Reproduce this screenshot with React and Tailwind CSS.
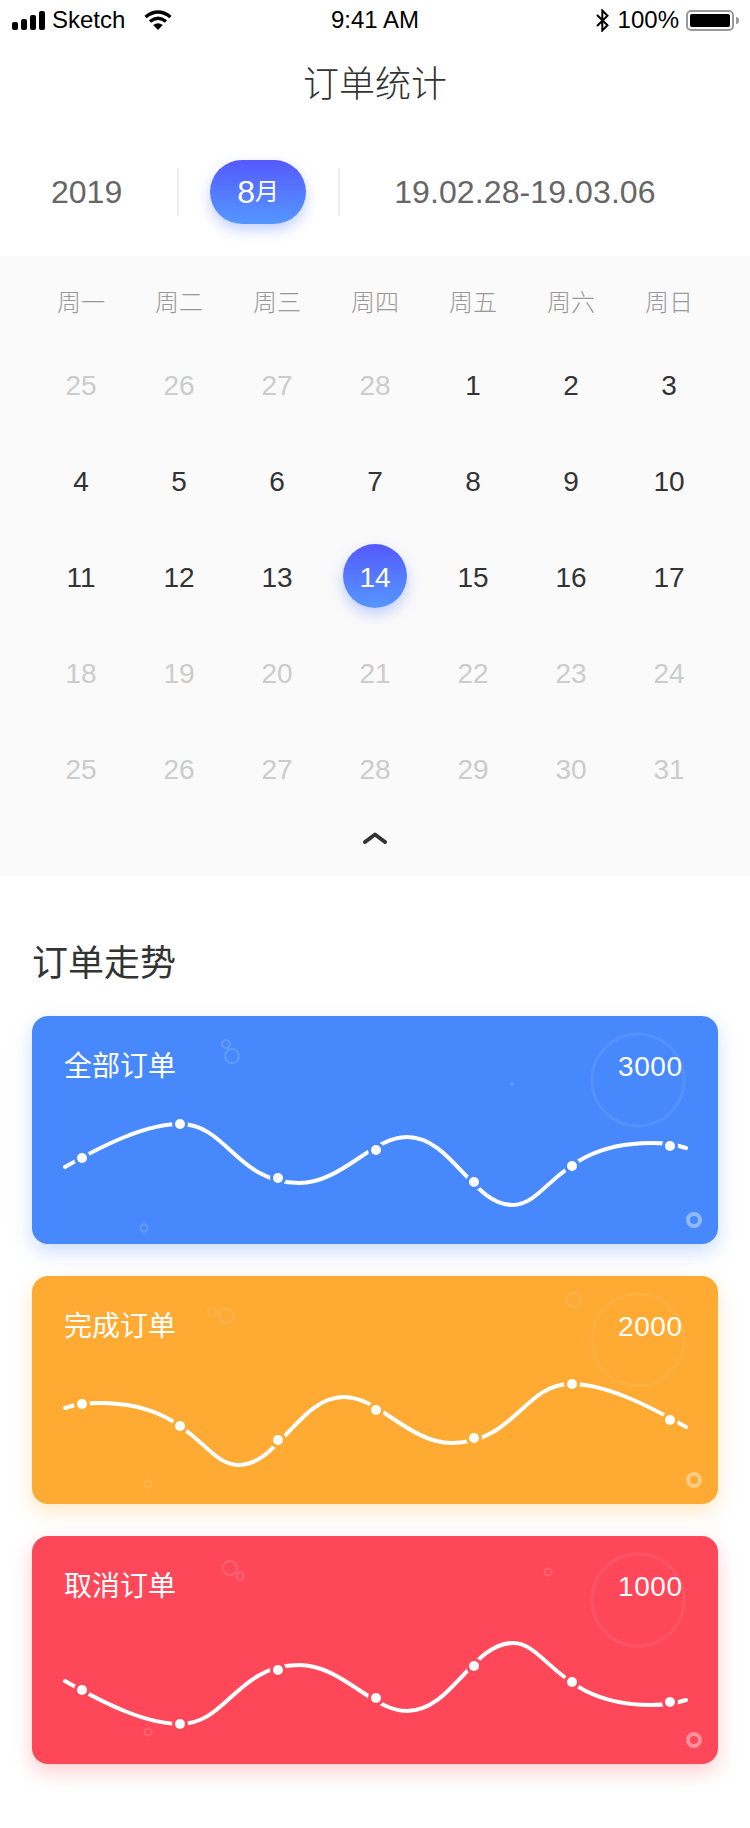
import React from "react";

const sans = "font-['Liberation_Sans','Noto_Sans_CJK_SC',sans-serif]";

const weekDays = ["周一", "周二", "周三", "周四", "周五", "周六", "周日"];

const calendar = [
  [25, 26, 27, 28, 1, 2, 3],
  [4, 5, 6, 7, 8, 9, 10],
  [11, 12, 13, 14, 15, 16, 17],
  [18, 19, 20, 21, 22, 23, 24],
  [25, 26, 27, 28, 29, 30, 31],
];

const dotX = [50, 148, 246, 344, 442, 540, 638];

const cards = [
  {
    title: "全部订单",
    total: "3000",
    color: "#4789FD",
    box: "bg-[#4789FD] shadow-[0_8px_20px_rgba(71,137,253,0.28)]",
    line: "M33 151 C 75 127 115 108 148 108 C 195 108 205 167 267 167 C 310 167 340 121 375 121 C 420 121 440 189 481 189 C 515 189 527 127 619 127 C 635 127 645 129 654 132",
    dots: [142, 108, 162, 134, 166, 150, 130],
    bubbleOpacity: 0.16,
    bubbles: [
      [200, 40, 7],
      [194, 28, 4],
      [112, 212, 3.5],
    ],
    speck: true,
  },
  {
    title: "完成订单",
    total: "2000",
    color: "#FFAB33",
    box: "bg-[#FFAB33] shadow-[0_8px_20px_rgba(255,171,51,0.28)]",
    line: "M33 132 C 42 129 52 127 68 127 C 160 127 172 189 206 189 C 247 189 267 121 312 121 C 347 121 377 167 420 167 C 482 167 492 108 539 108 C 572 108 612 127 654 151",
    dots: [128, 150, 164, 134, 162, 108, 144],
    bubbleOpacity: 0.12,
    bubbles: [
      [194, 40, 7],
      [180, 36, 4],
      [542, 24, 7],
      [116, 208, 3.5],
    ],
  },
  {
    title: "取消订单",
    total: "1000",
    color: "#FF475A",
    box: "bg-[#FF475A] shadow-[0_8px_20px_rgba(255,71,90,0.28)]",
    line: "M33 145 C 75 169 115 188 148 188 C 195 188 205 129 267 129 C 310 129 340 175 375 175 C 420 175 440 107 481 107 C 515 107 527 169 619 169 C 635 169 645 167 654 164",
    dots: [154, 188, 134, 162, 130, 146, 166],
    bubbleOpacity: 0.14,
    bubbles: [
      [198, 32, 7],
      [208, 40, 3.5],
      [516, 36, 3.5],
      [116, 196, 3.5],
    ],
  },
];

const StatusBar = () => (
  <div className="grid grid-cols-3 items-center h-10 text-[24px] leading-none text-black">
    <div className="flex items-center pl-3">
      <div className="flex items-end gap-[3px] h-[19px]">
        <span className="w-[6px] h-[8px] rounded-[2px] bg-black" />
        <span className="w-[6px] h-[11px] rounded-[2px] bg-black" />
        <span className="w-[6px] h-[15px] rounded-[2px] bg-black" />
        <span className="w-[6px] h-[19px] rounded-[2px] bg-black" />
      </div>
      <span className="ml-[7px]">Sketch</span>
      <svg className="ml-[19px]" width="28" height="20" viewBox="0 0 28 20">
        <path d="M1.5 7 Q14 -3 26.5 7" fill="none" stroke="#000" strokeWidth="3.4" />
        <path d="M6 11.5 Q14 5 22 11.5" fill="none" stroke="#000" strokeWidth="3.4" />
        <path d="M14 20 L9.2 15 Q14 11.5 18.8 15 Z" fill="#000" />
      </svg>
    </div>
    <div className="text-center">9:41 AM</div>
    <div className="flex items-center justify-end pr-[11px]">
      <svg width="13" height="23" viewBox="0 0 13 23">
        <path d="M1 6 L11.5 16.2 L6.3 21.5 L6.3 1.5 L11.5 6.8 L1 17" fill="none" stroke="#000" strokeWidth="2" />
      </svg>
      <span className="ml-[9px]">100%</span>
      <div className="ml-[7px] flex items-center">
        <div className="w-[48px] h-[21px] rounded-[5px] border-2 border-[#999] p-[2px]">
          <div className="w-full h-full rounded-[2px] bg-black" />
        </div>
        <span className="w-[3px] h-[7px] rounded-r-sm bg-[#999] ml-[2px]" />
      </div>
    </div>
  </div>
);

const Calendar = () => (
  <div className="bg-[#FAFAFA] px-8 pt-6 pb-8">
    <div className="grid grid-cols-7 h-[46px] mb-3 items-center text-center text-[24px] font-light text-[#999]">
      {weekDays.map((d) => (
        <div key={d}>{d}</div>
      ))}
    </div>
    <div className="grid grid-cols-7 auto-rows-[96px] items-center justify-items-center text-[28px]">
      {calendar.map((week, i) =>
        week.map((day, j) => {
          const active = i === 1 || (i === 0 && day < 10) || i === 2;
          if (i === 2 && day === 14) {
            return (
              <div
                key={`${i}-${j}`}
                className="flex w-16 h-16 mb-1 pt-1 items-center justify-center rounded-full bg-gradient-to-b from-[#5558FF] to-[#5596FF] text-white shadow-[0_6px_14px_rgba(85,120,255,0.35)]"
              >
                {day}
              </div>
            );
          }
          return (
            <div key={`${i}-${j}`} className={active ? "text-[#333]" : "text-[#CCC]"}>
              {day}
            </div>
          );
        })
      )}
    </div>
    <div className="flex justify-center mt-[14px]">
      <svg width="24" height="12" viewBox="0 0 24 12">
        <path d="M2 10 L12 2.5 L22 10" fill="none" stroke="#333" strokeWidth="4" strokeLinecap="round" strokeLinejoin="round" />
      </svg>
    </div>
  </div>
);

const OrderCard = ({ card }) => (
  <div className={`relative h-[228px] rounded-2xl overflow-hidden ${card.box}`}>
    <svg className="absolute inset-0" width="686" height="228" viewBox="0 0 686 228">
      <circle cx="606" cy="64" r="46" fill="none" stroke="#fff" strokeOpacity="0.07" strokeWidth="3" />
      {card.bubbles.map(([x, y, r]) => (
        <circle key={`${x}-${y}`} cx={x} cy={y} r={r} fill="none" stroke="#fff" strokeOpacity={card.bubbleOpacity} strokeWidth="2" />
      ))}
      {card.speck && <circle cx="480" cy="68" r="2" fill="#fff" fillOpacity="0.16" />}
      <circle cx="662" cy="204" r="6" fill="none" stroke="#fff" strokeOpacity="0.4" strokeWidth="4" />
    </svg>
    <div className="relative flex items-center h-[102px] pl-8 text-[28px] text-white">
      <span className="w-[112px]">{card.title}</span>
      <span className="ml-[442px] tracking-[0.6px]">{card.total}</span>
    </div>
    <svg className="absolute left-0 top-0" width="686" height="228" viewBox="0 0 686 228">
      <path d={card.line} fill="none" stroke="#fff" strokeWidth="4" strokeLinecap="round" />
      {dotX.map((x, i) => (
        <g key={x}>
          <circle cx={x} cy={card.dots[i]} r="8" fill={card.color} />
          <circle cx={x} cy={card.dots[i]} r="5" fill="#fff" />
        </g>
      ))}
    </svg>
  </div>
);

export default function App() {
  return (
    <div className={`w-[750px] h-[1828px] bg-white overflow-hidden ${sans}`}>
      <StatusBar />
      <h1 className="h-[90px] flex items-center justify-center text-[36px] font-light text-[#333]">订单统计</h1>

      <div className="flex items-center pl-[51px] pt-[30px] pb-8 text-[32px] text-[#666]">
        <span>2019</span>
        <div className="ml-[55px] w-[2px] h-12 bg-[#EEE]" />
        <div className="ml-[31px] flex w-24 h-16 items-center justify-center rounded-[32px] bg-gradient-to-b from-[#5558FF] to-[#5596FF] text-white shadow-[0_6px_14px_rgba(85,120,255,0.35)]">
          8<span className="text-[24px]">月</span>
        </div>
        <div className="ml-8 w-[2px] h-12 bg-[#EEE]" />
        <span className="ml-[54px] tracking-[0.1px]">19.02.28-19.03.06</span>
      </div>

      <Calendar />

      <div className="px-8 pt-[58px]">
        <h2 className="h-[60px] flex items-center text-[36px] text-[#333]">订单走势</h2>
        <div className="mt-[22px] flex flex-col gap-8">
          {cards.map((card) => (
            <OrderCard key={card.title} card={card} />
          ))}
        </div>
      </div>
    </div>
  );
}
